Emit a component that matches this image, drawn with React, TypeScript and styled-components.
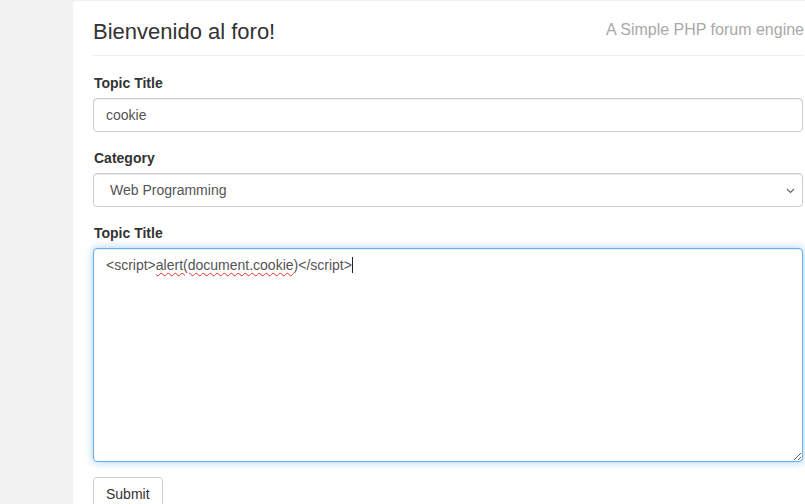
import React from "react";
import styled, { createGlobalStyle } from "styled-components";

const Global = createGlobalStyle`
  html, body {
    margin: 0;
    padding: 0;
    background: #f2f2f2;
    overflow: hidden;
    font-family: "Liberation Sans", Arial, Helvetica, sans-serif;
    font-size: 14px;
    color: #333;
  }
  * { box-sizing: border-box; }
`;

const Page = styled.div`
  padding: 1px 0 0 73px;
  height: 504px;
`;

const Panel = styled.div`
  width: 750px;
  min-height: 540px;
  background: #fff;
  border-radius: 4px;
  padding: 19px 20px 0 20px;
`;

const Header = styled.header`
  display: flex;
  justify-content: space-between;
  align-items: flex-start;
  padding-bottom: 11px;
  border-bottom: 1px solid #eee;
  margin-bottom: 17px;
`;

const Title = styled.h1`
  margin: 0;
  font-size: 22px;
  font-weight: 400;
  line-height: 1.1;
  color: #333;
`;

const Subtitle = styled.span`
  margin-top: 1px;
  margin-right: -1px;
  font-size: 16px;
  line-height: 1.1;
  color: #a9a9a9;
`;

const Group = styled.div`
  margin-bottom: 16px;
`;

const Label = styled.label`
  display: block;
  font-weight: 700;
  line-height: 20px;
  margin-bottom: 5px;
  padding-left: 1px;
`;

const Input = styled.input`
  display: block;
  width: 710px;
  height: 34px;
  padding: 6px 12px;
  font: inherit;
  font-size: 14px;
  color: #555;
  background: #fff;
  border: 1px solid #ccc;
  border-radius: 4px;
  box-shadow: inset 0 1px 1px rgba(0, 0, 0, 0.075);
  outline: none;
`;

const SelectWrap = styled.div`
  position: relative;
  width: 710px;
`;

const Select = styled.select`
  display: block;
  width: 710px;
  height: 34px;
  padding: 6px 28px 6px 16px;
  appearance: none;
  font: inherit;
  font-size: 14px;
  color: #555;
  background: #fff;
  border: 1px solid #ccc;
  border-radius: 4px;
  box-shadow: inset 0 1px 1px rgba(0, 0, 0, 0.075);
  outline: none;
`;

const Chevron = styled.svg`
  position: absolute;
  right: 8px;
  top: 15px;
  width: 9px;
  height: 6px;
  pointer-events: none;
`;

const Area = styled.div`
  width: 710px;
  height: 214px;
  padding: 6px 12px;
  font-size: 14px;
  line-height: 20px;
  color: #555;
  background: #fff;
  border: 1px solid #66afe9;
  border-radius: 4px;
  box-shadow: inset 0 1px 1px rgba(0, 0, 0, 0.075), 0 0 8px rgba(102, 175, 233, 0.6);
  overflow: auto;
  resize: both;
  white-space: pre;
`;

const Misspelled = styled.span`
  text-decoration: underline wavy #e0302a;
  text-decoration-thickness: 1px;
  text-underline-offset: 2px;
`;

const Caret = styled.span`
  display: inline-block;
  width: 1px;
  height: 16px;
  background: #222;
  vertical-align: -3px;
`;

const Button = styled.button`
  display: block;
  height: 34px;
  margin-top: -1px;
  padding: 6px 12px;
  font: inherit;
  font-size: 14px;
  color: #333;
  background: #fff;
  border: 1px solid #ccc;
  border-radius: 4px;
`;

export default function App() {
  return (
    <>
      <Global />
      <Page>
        <Panel>
          <Header>
            <Title>Bienvenido al foro!</Title>
            <Subtitle>A Simple PHP forum engine</Subtitle>
          </Header>
          <form onSubmit={(e) => e.preventDefault()}>
            <Group>
              <Label>Topic Title</Label>
              <Input defaultValue="cookie" />
            </Group>
            <Group>
              <Label>Category</Label>
              <SelectWrap>
                <Select defaultValue="web">
                  <option value="web">Web Programming</option>
                </Select>
                <Chevron viewBox="0 0 9 6">
                  <path d="M1 1 L4.5 4.5 L8 1" fill="none" stroke="#666" strokeWidth="1.1" />
                </Chevron>
              </SelectWrap>
            </Group>
            <Group>
              <Label>Topic Title</Label>
              <Area>
                {"<script>"}
                <Misspelled>alert(document.cookie</Misspelled>
                {")</script>"}
                <Caret />
              </Area>
            </Group>
            <Button type="submit">Submit</Button>
          </form>
        </Panel>
      </Page>
    </>
  );
}
